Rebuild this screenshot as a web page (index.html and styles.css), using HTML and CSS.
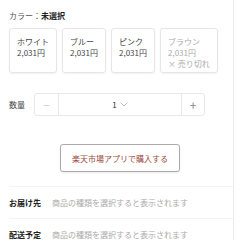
FILE: index.html
```html
<!DOCTYPE html>
<html lang="ja">
<head>
    <meta charset="UTF-8">
    <meta name="viewport" content="width=device-width, initial-scale=1.0">
    <title>商品選択</title>
    <link rel="stylesheet" href="styles.css">
</head>
<body>
  <div id="page">
    <div class="colorLabel">カラー：<b>未選択</b></div>
    <div class="swatches">
      <div class="swatch">
        <div>ホワイト</div>
        <div>2,031円</div>
      </div>
      <div class="swatch">
        <div>ブルー</div>
        <div>2,031円</div>
      </div>
      <div class="swatch">
        <div>ピンク</div>
        <div>2,031円</div>
      </div>
      <div class="swatch soldOut">
        <div>ブラウン</div>
        <div>2,031円</div>
        <div>× 売り切れ</div>
      </div>
    </div>

    <div class="qtyRow">
      <span class="qtyLabel">数量</span>
      <div class="stepper">
        <div class="stepBtn minus">−</div>
        <div class="stepValue">1
          <svg width="8" height="5" viewBox="0 0 8 5"><path d="M0.5 0.5 L4 4 L7.5 0.5" fill="none" stroke="#aaa" stroke-width="0.8"/></svg>
        </div>
        <div class="stepBtn plus">+</div>
      </div>
    </div>

    <div class="buyWrap">
      <button class="buyBtn">楽天市場アプリで購入する</button>
    </div>

    <div class="info">
      <div class="infoRow">
        <span class="infoLabel">お届け先</span>
        <span class="infoText">商品の種類を選択すると表示されます</span>
      </div>
      <div class="infoRow">
        <span class="infoLabel">配送予定</span>
        <span class="infoText">商品の種類を選択すると表示されます</span>
      </div>
    </div>
  </div>
</body>
</html>
```

FILE: styles.css
```css
body
{
    margin: 0;
    background: #fff;
    font-family: "Noto Sans CJK JP", "Noto Sans", sans-serif;
    font-size: 8px;
    color: #333;
    overflow: hidden;
}
#page
{
    width: 224px;
    height: 240px;
    padding-left: 9px;
    border-right: 1px solid #ececec;
}
.colorLabel
{
    padding-top: 10px;
    line-height: 12px;
    color: #555;
}
.colorLabel b
{
    color: #222;
}
.swatches
{
    display: flex;
    gap: 5px;
    margin-top: 6px;
}
.swatch
{
    height: 45px;
    box-sizing: border-box;
    padding: 7px 7px;
    border: 1px solid #e6e6e6;
    border-radius: 3px;
    box-shadow: 0 1px 2px rgba(0,0,0,0.06);
    line-height: 11px;
    color: #444;
}
.soldOut
{
    color: #aaa;
}
.qtyRow
{
    display: flex;
    align-items: center;
    margin-top: 20px;
}
.qtyLabel
{
    width: 25px;
    color: #444;
}
.stepper
{
    display: flex;
    width: 171px;
    height: 23px;
    box-sizing: border-box;
    border: 1px solid #e8e8e8;
    border-radius: 3px;
}
.stepBtn
{
    display: flex;
    align-items: center;
    justify-content: center;
    color: #aaa;
    font-size: 12px;
}
.minus
{
    width: 23px;
    border-right: 1px solid #e8e8e8;
    color: #d0d0d0;
}
.plus
{
    width: 22px;
    border-left: 1px solid #e8e8e8;
    color: #888;
}
.stepValue
{
    flex: 1;
    display: flex;
    align-items: center;
    justify-content: center;
    gap: 3px;
    color: #333;
}
.buyWrap
{
    margin-top: 28px;
    padding-left: 51px;
}
.buyBtn
{
    width: 120px;
    height: 28px;
    background: #fff;
    border: 1px solid #aaa;
    border-radius: 3px;
    font-family: "Noto Sans CJK JP", sans-serif;
    font-size: 8px;
    color: #9a4a3c;
    box-shadow: 0 1px 2px rgba(0,0,0,0.08);
}
.info
{
    margin-top: 14px;
}
.infoRow
{
    display: flex;
    align-items: center;
    height: 31px;
    border-top: 1px solid #f4f4f4;
}
.infoLabel
{
    width: 43px;
    font-weight: bold;
    color: #222;
}
.infoText
{
    color: #aaa;
}
```
